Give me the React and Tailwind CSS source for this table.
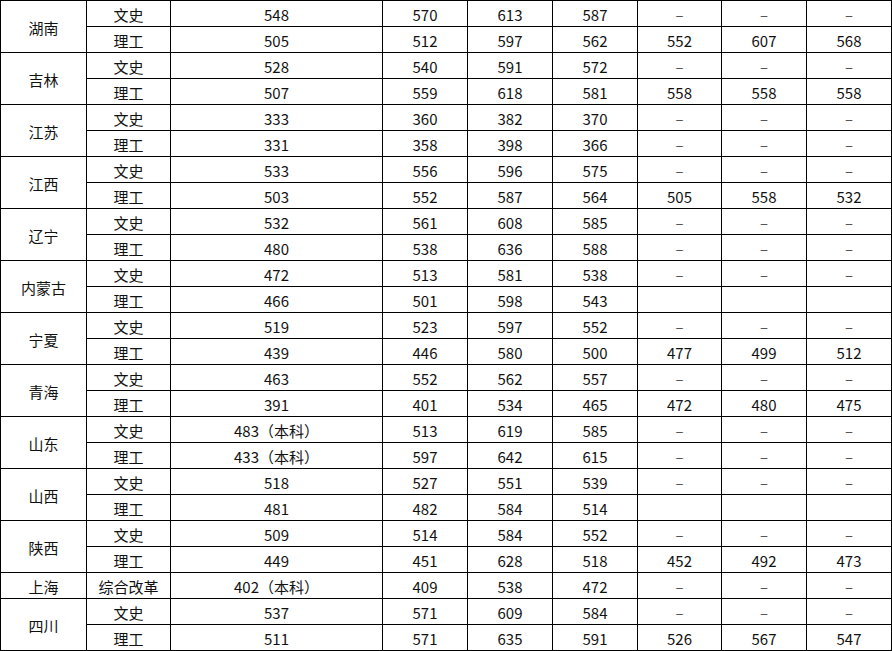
const D = '–';

const ROWS = [
  ['湖南', [
    ['文史', '548', '570', '613', '587', D, D, D],
    ['理工', '505', '512', '597', '562', '552', '607', '568'],
  ]],
  ['吉林', [
    ['文史', '528', '540', '591', '572', D, D, D],
    ['理工', '507', '559', '618', '581', '558', '558', '558'],
  ]],
  ['江苏', [
    ['文史', '333', '360', '382', '370', D, D, D],
    ['理工', '331', '358', '398', '366', D, D, D],
  ]],
  ['江西', [
    ['文史', '533', '556', '596', '575', D, D, D],
    ['理工', '503', '552', '587', '564', '505', '558', '532'],
  ]],
  ['辽宁', [
    ['文史', '532', '561', '608', '585', D, D, D],
    ['理工', '480', '538', '636', '588', D, D, D],
  ]],
  ['内蒙古', [
    ['文史', '472', '513', '581', '538', D, D, D],
    ['理工', '466', '501', '598', '543', '', '', ''],
  ]],
  ['宁夏', [
    ['文史', '519', '523', '597', '552', D, D, D],
    ['理工', '439', '446', '580', '500', '477', '499', '512'],
  ]],
  ['青海', [
    ['文史', '463', '552', '562', '557', D, D, D],
    ['理工', '391', '401', '534', '465', '472', '480', '475'],
  ]],
  ['山东', [
    ['文史', '483（本科）', '513', '619', '585', D, D, D],
    ['理工', '433（本科）', '597', '642', '615', D, D, D],
  ]],
  ['山西', [
    ['文史', '518', '527', '551', '539', D, D, D],
    ['理工', '481', '482', '584', '514', '', '', ''],
  ]],
  ['陕西', [
    ['文史', '509', '514', '584', '552', D, D, D],
    ['理工', '449', '451', '628', '518', '452', '492', '473'],
  ]],
  ['上海', [
    ['综合改革', '402（本科）', '409', '538', '472', D, D, D],
  ]],
  ['四川', [
    ['文史', '537', '571', '609', '584', D, D, D],
    ['理工', '511', '571', '635', '591', '526', '567', '547'],
  ]],
];

function Cell({ children, className = '' }) {
  return (
    <div className={`bg-white flex items-center justify-center pt-[2px] leading-none whitespace-nowrap ${className}`}>
      {children}
    </div>
  );
}

export default function App() {
  return (
    <div
      className="w-[892px] h-[651px] bg-white text-[15px] text-[#111]"
      style={{ fontFamily: '"Noto Sans CJK SC", "Liberation Sans", sans-serif' }}
    >
      <div className="grid grid-cols-[85px_83px_211px_84px_84px_84px_83px_84px_84px] auto-rows-[25px] gap-px p-px bg-black">
        {ROWS.map(([prov, rows]) => (
          <Province key={prov} prov={prov} rows={rows} />
        ))}
      </div>
    </div>
  );
}

function Province({ prov, rows }) {
  return (
    <>
      <Cell className={rows.length === 2 ? 'row-span-2' : ''}>{prov}</Cell>
      {rows.map((r, i) => (
        <Row key={i} cells={r} first={i === 0} />
      ))}
    </>
  );
}

function Row({ cells, first }) {
  return (
    <>
      {cells.map((c, j) => (
        <Cell key={j} className={!first && j === 0 ? 'col-start-2' : ''}>
          {c === D ? <span className="text-[#555]">{c}</span> : c}
        </Cell>
      ))}
    </>
  );
}
